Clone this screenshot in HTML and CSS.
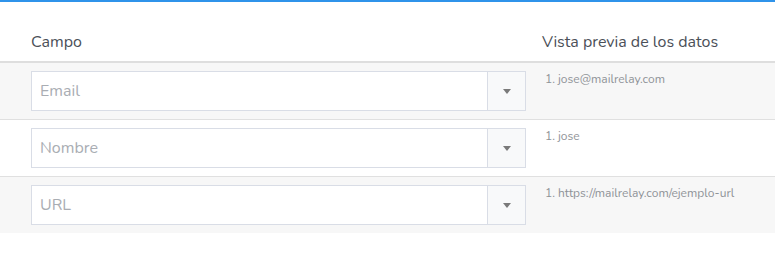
FILE: index.html
```html
<!DOCTYPE html>
<html lang="es">
<head>
<meta charset="utf-8">
<title>Campos</title>
<link rel="stylesheet" href="styles.css">
</head>
<body>
<div class="panel">
  <div class="head">
    <div class="col-field">Campo</div>
    <div class="col-preview">Vista previa de los datos</div>
  </div>
  <div class="row alt">
    <div class="col-field">
      <div class="select"><span class="ph">Email</span><span class="btn"><svg width="8" height="5" viewBox="0 0 8 5"><path d="M0 0h8L4 5z" fill="#7a7a7a"/></svg></span></div>
    </div>
    <div class="col-preview"><div class="val">1. jose@mailrelay.com</div></div>
  </div>
  <div class="row">
    <div class="col-field">
      <div class="select"><span class="ph">Nombre</span><span class="btn"><svg width="8" height="5" viewBox="0 0 8 5"><path d="M0 0h8L4 5z" fill="#7a7a7a"/></svg></span></div>
    </div>
    <div class="col-preview"><div class="val">1. jose</div></div>
  </div>
  <div class="row alt last">
    <div class="col-field">
      <div class="select"><span class="ph">URL</span><span class="btn"><svg width="8" height="5" viewBox="0 0 8 5"><path d="M0 0h8L4 5z" fill="#7a7a7a"/></svg></span></div>
    </div>
    <div class="col-preview"><div class="val">1. https://mailrelay.com/ejemplo-url</div></div>
  </div>
</div>
</body>
</html>
```

FILE: styles.css
```css
* { box-sizing: border-box; }
html, body { margin: 0; padding: 0; background: #fff; }
body { font-family: "Nunito", Lato, "Noto Sans", sans-serif; color: #4a4f57; }
.panel { border-top: 2px solid #2f93ea; width: 775px; }
.head {
  display: grid;
  grid-template-columns: 526px 1fr;
  height: 61px;
  border-bottom: 2px solid #dedede;
  align-items: center;
  padding-top: 20px;
  font-size: 16px;
  color: #4b5058;
}
.head .col-field { padding-left: 31px; }
.head .col-preview { padding-left: 16px; }
.row {
  display: grid;
  grid-template-columns: 526px 1fr;
  padding: 8px 0;
  border-bottom: 1px solid #e0e0e0;
  background: #fff;
}
.row.alt { background: #f7f7f7; }
.row.last { border-bottom: none; height: 56px; }
.row .col-field { padding-left: 31px; }
.select {
  display: flex;
  height: 40px;
  width: 495px;
  border: 1px solid #d9dde6;
  background: #fff;
}
.ph {
  flex: 1;
  display: flex;
  align-items: center;
  padding-left: 8px;
  font-size: 16px;
  color: #a9adb3;
}
.btn {
  width: 38px;
  border-left: 1px solid #d9dde6;
  background: #f8f9fa;
  display: flex;
  align-items: center;
  justify-content: center;
}
.col-preview { padding-left: 19px; }
.val { font-size: 12px; color: #8f9397; padding-top: 0; }
```
